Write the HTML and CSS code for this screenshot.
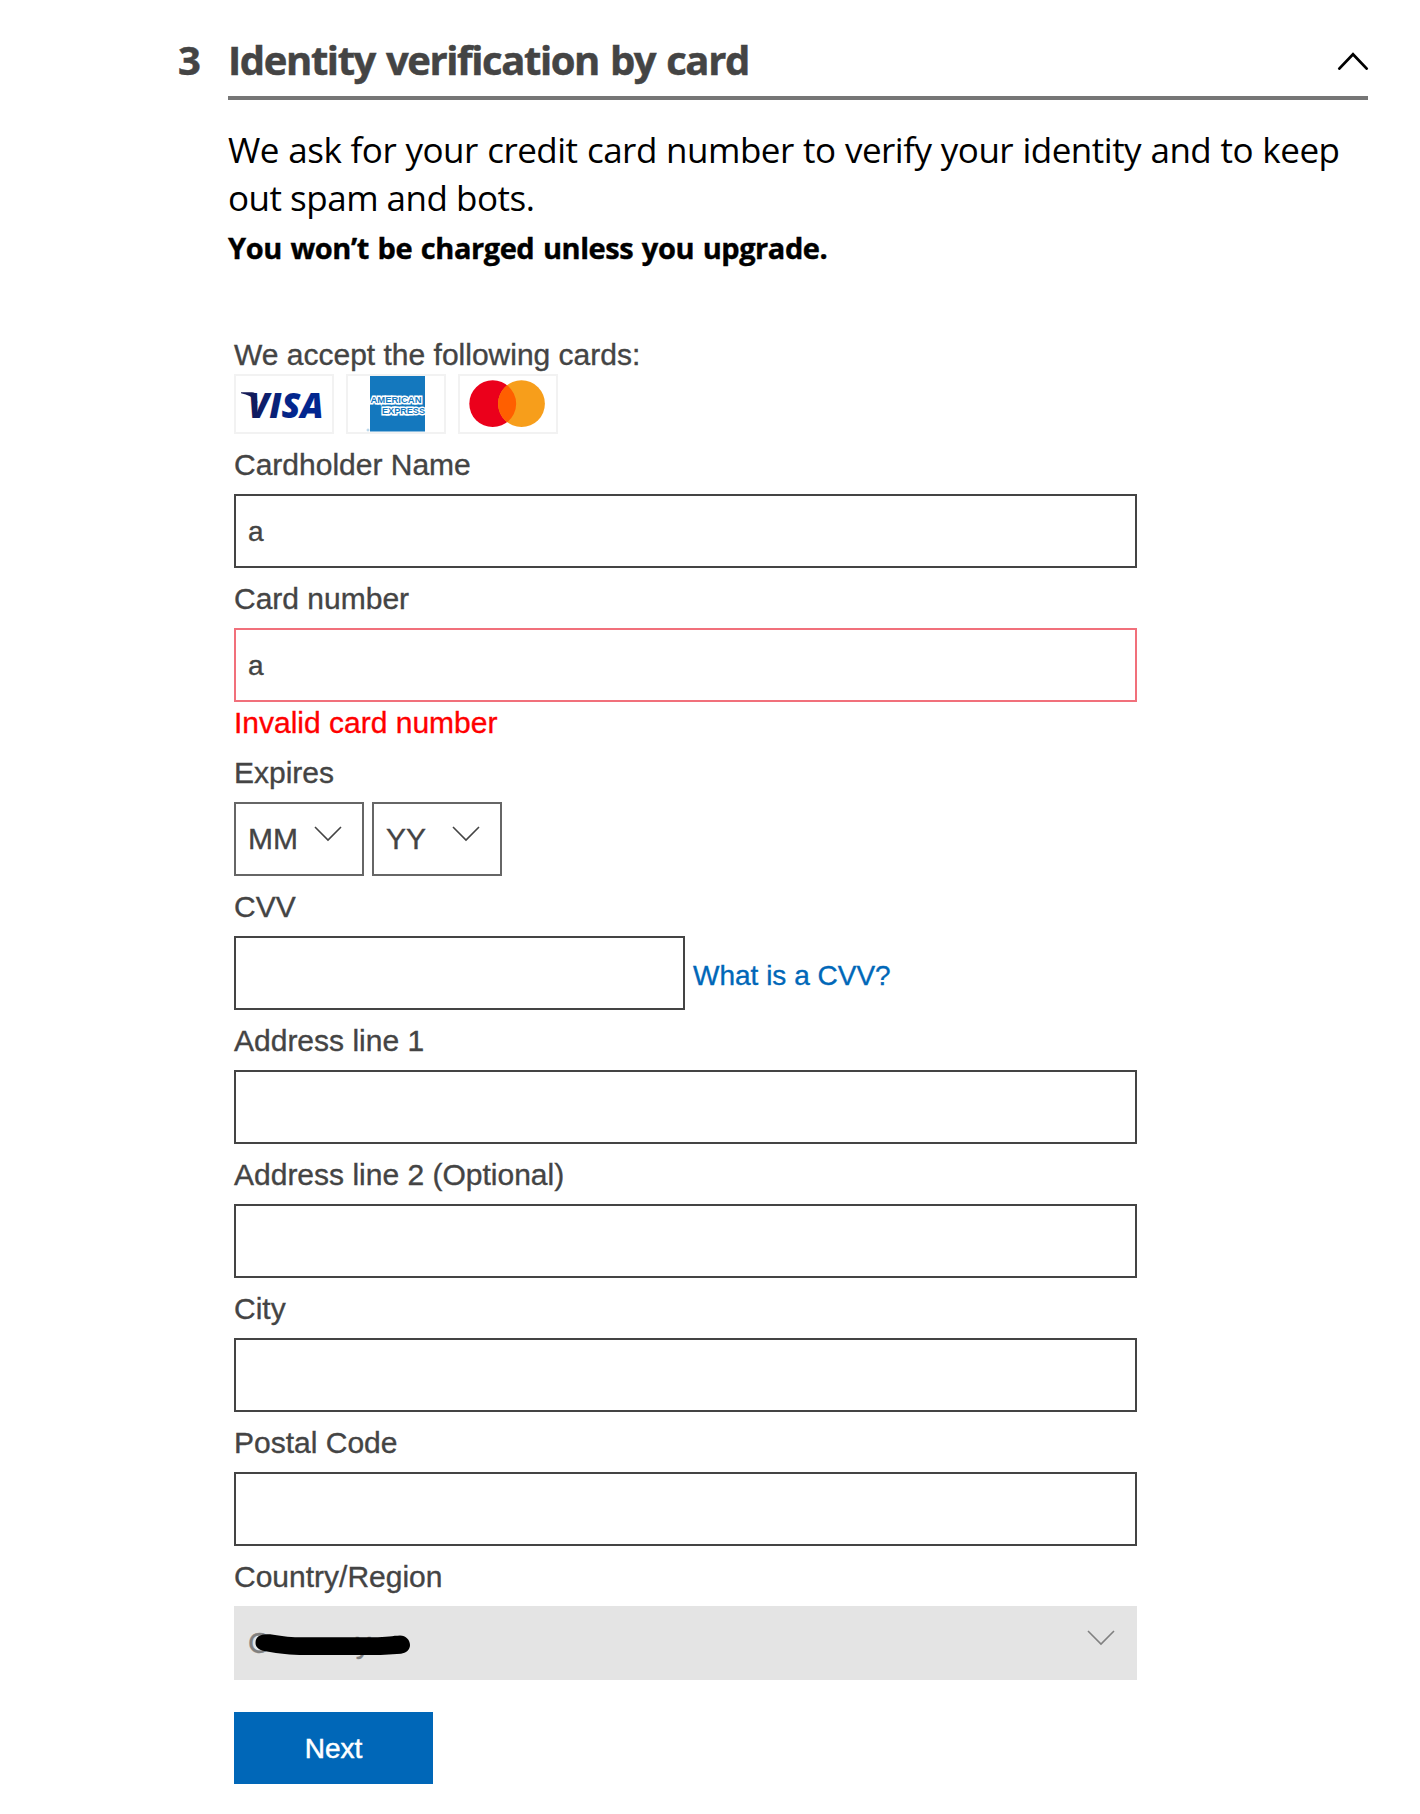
FILE: index.html
```html
<!DOCTYPE html>
<html lang="en">
<head>
<meta charset="utf-8">
<title>Identity verification by card</title>
<link rel="stylesheet" href="styles.css">
</head>
<body>
<main class="step">
  <div class="step-number">3</div>
  <section class="step-body">
    <header class="step-header">
      <h1 class="step-title"><span>Identity verification by card</span></h1>
      <svg class="collapse" width="34" height="22" viewBox="0 0 34 22" fill="none" stroke="#000" stroke-width="2.8" stroke-linecap="round"><path d="M3.3 17.6 17 3.2 30.7 17.6"/></svg>
    </header>
    <p class="intro"><span>We ask for your credit card number to verify your identity and to keep</span><br><span class="intro-end">out spam and bots.</span></p>
    <p class="notice"><span>You won’t be charged unless you upgrade.</span></p>

    <form class="form">
      <div class="accept">We accept the following cards:</div>
      <div class="cards">
        <svg class="card" viewBox="0 0 96 56">
          <defs><linearGradient id="visa" x1="0" x2="1"><stop offset="0" stop-color="#141a56"/><stop offset=".6" stop-color="#02268f"/><stop offset="1" stop-color="#02268f"/></linearGradient></defs>
          <path d="M5 16.200H16Q19.500 16.200 20 19L21.500 27Q17 19.500 5 17.200Z" fill="#141a56"/>
          <text class="visa" x="12" y="42" textLength="75.500" lengthAdjust="spacingAndGlyphs" fill="url(#visa)">VISA</text>
        </svg>
        <svg class="card" viewBox="0 0 96 56">
          <rect x="22" width="55" height="55.500" fill="#1478be"/>
          <g class="amex">
            <text x="22.500" y="26.800" textLength="51" lengthAdjust="spacingAndGlyphs">AMERICAN</text>
            <text x="34" y="38.200" textLength="43" lengthAdjust="spacingAndGlyphs">EXPRESS</text>
          </g>
          <circle cx="20" cy="54" r="1" fill="none" stroke="#79b2da" stroke-width=".6"/>
        </svg>
        <svg class="card" viewBox="0 0 96 56">
          <circle cx="32.700" cy="27.700" r="23.400" fill="#eb001b"/>
          <circle cx="61.500" cy="27.700" r="23.400" fill="#f79e1b"/>
          <path d="M47.100 9.200a23.400 23.400 0 0 1 0 37a23.400 23.400 0 0 1 0-37z" fill="#ff5f00"/>
        </svg>
      </div>

      <label class="label" for="name">Cardholder Name</label>
      <input class="input" id="name" value="a">

      <label class="label" for="number">Card number</label>
      <input class="input invalid" id="number" value="a">
      <div class="error">Invalid card number</div>

      <div class="label">Expires</div>
      <div class="row">
        <div class="select short"><span>MM</span><svg class="chevron" viewBox="0 0 28 16"><path d="M1 1 14 14 27 1"/></svg></div>
        <div class="select short"><span>YY</span><svg class="chevron" viewBox="0 0 28 16"><path d="M1 1 14 14 27 1"/></svg></div>
      </div>

      <label class="label" for="cvv">CVV</label>
      <div class="row">
        <input class="input cvv" id="cvv">
        <a class="link">What is a CVV?</a>
      </div>

      <label class="label" for="addr1">Address line 1</label>
      <input class="input" id="addr1">
      <label class="label" for="addr2">Address line 2 (Optional)</label>
      <input class="input" id="addr2">
      <label class="label" for="city">City</label>
      <input class="input" id="city">
      <label class="label" for="postal">Postal Code</label>
      <input class="input" id="postal">

      <div class="label">Country/Region</div>
      <div class="select country">
        <span class="country-value">C<span class="country-tail">y</span></span>
        <svg class="chevron" viewBox="0 0 28 16"><path d="M1 1 14 14 27 1"/></svg>
        <svg class="redaction" width="156" height="21" viewBox="0 0 156 21"><path d="M0.500 9C0.500 3 5 .3 12 .3C20 .3 30 3.100 40 3.200H118C132 3.200 138 1.700 145 1.500C151 1.500 155 6 155 11C155 16 151 19 146 19.700C135 20.600 125 21 112 21H50C35 21 24 19.500 12 17.500C5 16.500 .5 14 .5 9Z"/></svg>
      </div>

      <button class="next" type="button">Next</button>
    </form>
  </section>
</main>
</body>
</html>
```
FILE: styles.css
```css
* { box-sizing: border-box; }

body {
  margin: 0;
  background: #fff;
  color: #444;
  font-family: "Liberation Sans", Arial, sans-serif;
}

.step {
  display: flex;
  width: 1368px;
  padding-left: 178px;
}

.step-number,
.step-title {
  margin: 0;
  font: 700 40px/56px "Open Sans", "Noto Sans", sans-serif;
  -webkit-text-stroke: 0.5px currentColor;
}

.step-number {
  width: 50px;
  padding-top: 32px;
}

.step-body { flex: 1; }

.step-header {
  display: flex;
  justify-content: space-between;
  height: 100px;
  padding-top: 32px;
  border-bottom: 4px solid #767676;
}

.step-title { letter-spacing: -1.4px; word-spacing: 2px; white-space: nowrap; }

.collapse { margin: 19px -2px 0 0; }

.intro,
.notice {
  margin: 0;
  color: #000;
  font-family: "Open Sans", "Noto Sans", sans-serif;
  white-space: nowrap;
}

.intro {
  padding-top: 26px;
  font-size: 35px;
  line-height: 48px;
  letter-spacing: -0.5px;
  word-spacing: 0.7px;
}

.intro-end { word-spacing: 0; }

.notice {
  height: 48px;
  padding-top: 2px;
  font-size: 29px;
  font-weight: 700;
  line-height: 48px;
  letter-spacing: -0.45px;
  word-spacing: 1.6px;
  -webkit-text-stroke: 0.4px currentColor;
}

.form {
  display: flex;
  flex-direction: column;
  width: 909px;
  padding: 66px 0 0 6px;
  -webkit-text-stroke: 0.35px currentColor;
}

.accept {
  height: 38px;
  font-size: 30px;
  line-height: 38px;
}

.cards {
  display: flex;
  gap: 12px;
  -webkit-text-stroke: 0;
}

.card {
  width: 100px;
  height: 60px;
  border: 2px solid #f2f2f2;
}

.visa {
  font: italic 800 36px "Open Sans", sans-serif;
}

.amex {
  font: 700 9.5px "Liberation Sans", sans-serif;
  fill: #1478be;
  stroke: #fff;
  stroke-width: 2.8px;
  paint-order: stroke;
}

.label {
  height: 60px;
  padding-top: 12px;
  font-size: 30px;
  line-height: 38px;
}

.input {
  width: 903px;
  height: 74px;
  padding: 2px 12px 0;
  border: 2px solid #444;
  background: #fff;
  color: #444;
  font: 28px "Liberation Sans", Arial, sans-serif;
  -webkit-text-stroke: 0.35px currentColor;
}

.invalid { border-color: #f1707b; }

.error {
  height: 40px;
  padding-top: 2px;
  color: #f00;
  font-size: 30px;
  line-height: 38px;
}

.row {
  display: flex;
  align-items: center;
  gap: 8px;
}

.select {
  display: flex;
  justify-content: space-between;
  height: 74px;
  padding: 0 20px 0 12px;
  border: 2px solid #666;
  font-size: 30px;
  line-height: 70px;
}

.short { width: 130px; }

.chevron {
  width: 28px;
  height: 16px;
  margin-top: 22px;
  fill: none;
  stroke: #444;
  stroke-width: 1.6;
}

.cvv { width: 451px; }

.link {
  padding-top: 5px;
  color: #0067b8;
  font-size: 28px;
}

.country {
  position: relative;
  border: 0;
  padding: 0 22px 0 14px;
  background: #e4e4e4;
  color: #808080;
  line-height: 74px;
}

.country .chevron { margin-top: 24px; stroke: #808080; }

.country-tail { margin-left: 86px; }

/* Marker stroke drawn over the selected country */
.redaction {
  position: absolute;
  left: 21px;
  top: 28px;
}

.next {
  width: 199px;
  height: 72px;
  margin-top: 32px;
  padding: 1px 0 0;
  border: 0;
  background: #0067b8;
  color: #fff;
  font: 28px "Liberation Sans", Arial, sans-serif;
  -webkit-text-stroke: 0.5px currentColor;
}
```
